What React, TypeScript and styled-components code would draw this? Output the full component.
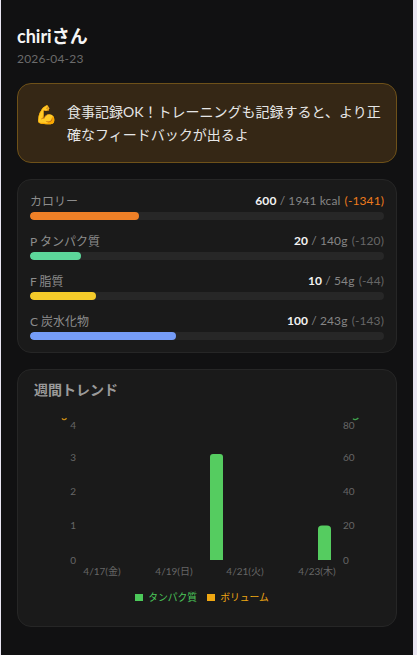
import React from "react";
import styled, { createGlobalStyle } from "styled-components";

const Global = createGlobalStyle`
  html, body { margin: 0; padding: 0; background: #e9e6f2; height: 100%; overflow: hidden; }
  #root { height: 100%; }
`;

const fontStack = `Lato, "Noto Sans CJK JP", sans-serif`;

const Page = styled.main`
  box-sizing: border-box;
  width: 412px;
  height: 655px;
  margin-left: 1px;
  padding: 24px 16px 0;
  background: #111112;
  font-family: ${fontStack};
  display: flex;
  flex-direction: column;
`;
const Title = styled.h1`
  margin: 0;
  font-size: 18px;
  line-height: 24px;
  font-weight: 700;
  color: #f5f5f5;
`;
const DateText = styled.div`
  margin-top: 3px;
  font-size: 12px;
  line-height: 16px;
  letter-spacing: 0.2px;
  color: #6b6b6b;
`;
const Banner = styled.section`
  box-sizing: border-box;
  margin-top: 16px;
  height: 80px;
  border: 1px solid #6e5119;
  border-radius: 14px;
  background: #352715;
  display: flex;
  align-items: flex-start;
  gap: 11px;
  padding: 16px 12px 0 17px;
`;
const BannerText = styled.p`
  margin: 0;
  font-size: 14px;
  line-height: 23px;
  color: #e6e6e6;
`;
const Card = styled.section`
  box-sizing: border-box;
  margin-top: 16px;
  border: 1px solid #262626;
  border-radius: 14px;
  background: #1a1a1a;
`;
const MacroCard = styled(Card)`
  height: 174px;
  padding: 10px 12px 0;
  display: flex;
  flex-direction: column;
  gap: 8px;
`;
const Macro = styled.div`
  height: 32px;
`;
const MacroHead = styled.div`
  display: flex;
  justify-content: space-between;
  align-items: center;
  height: 20px;
  margin-bottom: 2px;
  font-size: 12px;
`;
const MacroLabel = styled.span`
  color: #8c8c8c;
`;
const MacroValue = styled.span`
  color: #858585;
  letter-spacing: 0.1px;
  b { color: #f2f2f2; font-weight: 700; }
`;
const Diff = styled.span<{ $over?: boolean }>`
  margin-left: 1px;
  color: ${(p) => (p.$over ? "#ee7a1c" : "#666")};
`;
const Track = styled.div`
  height: 8px;
  border-radius: 4px;
  background: #272727;
  overflow: hidden;
`;
const Fill = styled.div<{ $color: string }>`
  height: 100%;
  border-radius: 4px;
  background: ${(p) => p.$color};
`;
const TrendCard = styled(Card)`
  height: 258px;
  padding: 0;
`;
const TrendTitle = styled.h2`
  margin: 0;
  padding: 10px 16px 0;
  font-size: 14px;
  line-height: 20px;
  font-weight: 700;
  color: #9a9a9a;
`;
const Chart = styled.svg`
  display: block;
`;
const Legend = styled.div`
  display: flex;
  justify-content: center;
  align-items: center;
  gap: 10px;
  margin-top: 5px;
  padding-right: 10px;
  font-size: 9.8px;
  line-height: 14px;
`;
const LegendItem = styled.span<{ $color: string }>`
  display: inline-flex;
  align-items: center;
  gap: 5px;
  color: ${(p) => p.$color};
`;
const Swatch = styled.i<{ $color: string }>`
  display: block;
  width: 8px;
  height: 7px;
  background: ${(p) => p.$color};
`;
const Emoji = styled.span`
  flex: none;
  width: 21px;
  margin-top: 3px;
  font-size: 18px;
  line-height: 24px;
  font-family: "Noto Color Emoji", sans-serif;
`;

const macros = [
  { label: "カロリー", v: "600", rest: " / 1941 kcal ", diff: "(-1341)", over: true, w: 109, c: "#ee8027" },
  { label: "P タンパク質", v: "20", rest: " / 140g ", diff: "(-120)", w: 51, c: "#5cd69a" },
  { label: "F 脂質", v: "10", rest: " / 54g ", diff: "(-44)", w: 66, c: "#f5cb2a" },
  { label: "C 炭水化物", v: "100", rest: " / 243g ", diff: "(-143)", w: 146, c: "#759cf7" },
];

const LEFT = [["4", 425], ["3", 457.5], ["2", 491], ["1", 525], ["0", 560]] as const;
const RIGHT = [["80", 425], ["60", 457.5], ["40", 491], ["20", 525], ["0", 560]] as const;
const XS = [["4/17(金)", 102], ["4/19(日)", 174], ["4/21(火)", 245], ["4/23(木)", 317]] as const;
const OX = 18;
const OY = 400;

export default function App() {
  return (
    <Page>
      <Global />
      <Title>chiriさん</Title>
      <DateText>2026-04-23</DateText>
      <Banner>
        <Emoji>💪</Emoji>
        <BannerText>食事記録OK！トレーニングも記録すると、より正確なフィードバックが出るよ</BannerText>
      </Banner>
      <MacroCard>
        {macros.map((m) => (
          <Macro key={m.label}>
            <MacroHead>
              <MacroLabel>{m.label}</MacroLabel>
              <MacroValue>
                <b>{m.v}</b>{m.rest}<Diff $over={m.over}>{m.diff}</Diff>
              </MacroValue>
            </MacroHead>
            <Track>
              <Fill $color={m.c} style={{ width: m.w }} />
            </Track>
          </Macro>
        ))}
      </MacroCard>
      <TrendCard>
        <TrendTitle>週間トレンド</TrendTitle>
        <Chart width="378" height="185" viewBox={`${OX} ${OY} 378 185`}>
          <g fontSize="10" fill="#666" fontFamily={fontStack}>
            {LEFT.map(([t, y]) => (
              <text key={t} x="76" y={y + 3.5} textAnchor="end">{t}</text>
            ))}
            {RIGHT.map(([t, y]) => (
              <text key={t} x="343" y={y + 3.5}>{t}</text>
            ))}
            {XS.map(([t, x]) => (
              <text key={t} x={x} y="575" textAnchor="middle">{t}</text>
            ))}
          </g>
          <path d="M62 418.4 Q64 421 66.6 418.2" stroke="#c98a14" strokeWidth="1.4" fill="none" />
          <path d="M353 418.6 Q355 421 358.4 418" stroke="#3fa34d" strokeWidth="1.4" fill="none" />
          <path d="M210 560 V457 Q210 454 213 454 H220 Q223 454 223 457 V560 Z" fill="#55cc60" />
          <path d="M318 560 V529 Q318 525.5 322 525.5 H327 Q331 525.5 331 529 V560 Z" fill="#55cc60" />
        </Chart>
        <Legend>
          <LegendItem $color="#4cc95a"><Swatch $color="#4cc95a" />タンパク質</LegendItem>
          <LegendItem $color="#efa712"><Swatch $color="#efa712" />ボリューム</LegendItem>
        </Legend>
      </TrendCard>
    </Page>
  );
}
